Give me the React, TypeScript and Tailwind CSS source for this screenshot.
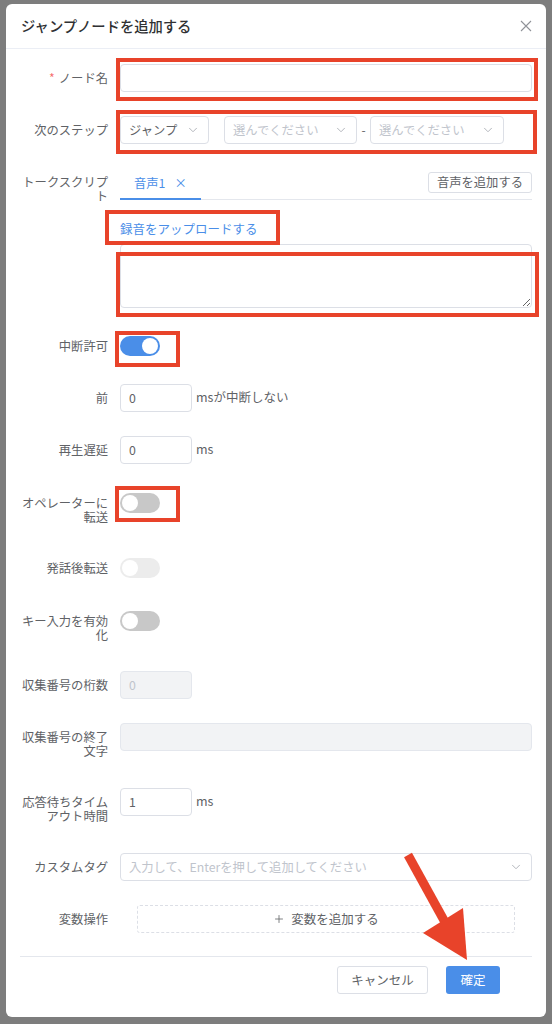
import React from "react";
import { ChevronDown, Plus } from "lucide-react";

// form label on the left, wraps after ~7 full-width chars
function Label({
  children,
  className = "",
  required = false,
}: {
  children: React.ReactNode;
  className?: string;
  required?: boolean;
}) {
  return (
    <div
      className={`w-[100px] shrink-0 pr-[12px] text-right text-[12.3px] leading-[14px] text-[#606266] ${className}`}
    >
      {required && <span className="mr-[4px] text-[#f56c6c]">*</span>}
      {children}
    </div>
  );
}

function Toggle({ state }: { state: "on" | "off" | "disabled" }) {
  const track =
    state === "on" ? "bg-[#4a8ee8]" : state === "off" ? "bg-[#c8c8c8]" : "bg-[#ececec]";
  return (
    <div className={`relative h-[20px] w-[40px] rounded-full ${track}`}>
      <span
        className={`absolute top-[2px] h-[16px] w-[16px] rounded-full bg-white ${
          state === "on" ? "left-[22px]" : "left-[2px]"
        }`}
      />
    </div>
  );
}

function Select({
  className,
  text,
  placeholder = false,
}: {
  className: string;
  text: string;
  placeholder?: boolean;
}) {
  return (
    <div
      className={`flex h-[28px] items-center justify-between rounded-[4px] border border-[#dcdfe6] pl-[8px] pr-[8px] text-[12.3px] ${className}`}
    >
      <span className={placeholder ? "text-[#c0c4cc]" : "text-[#606266]"}>{text}</span>
      <ChevronDown size={14} strokeWidth={1.5} className="text-[#a8abb2]" />
    </div>
  );
}

function SmallInput({ value, disabled = false }: { value: string; disabled?: boolean }) {
  return (
    <div
      className={`flex h-[28px] w-[72px] shrink-0 items-center rounded-[4px] border px-[8px] text-[12.3px] ${
        disabled
          ? "border-[#e4e7ed] bg-[#f2f3f5] text-[#c0c4cc]"
          : "border-[#dcdfe6] bg-white text-[#606266]"
      }`}
    >
      {value}
    </div>
  );
}

export default function App() {
  return (
    <div className="relative h-[1024px] w-[552px] overflow-hidden bg-[#7d7d7d] pl-[6px] pt-[4px] font-['Noto_Sans_CJK_JP','Noto_Sans',sans-serif]">
      <div className="h-[1013px] w-[540px] rounded-[6px] bg-white">
        {/* header */}
        <div className="flex h-[45px] items-center justify-between border-b border-[#ebeef5] pl-[15px] pr-[14px]">
          <h2 className="text-[14.3px] font-medium text-[#303133]">ジャンプノードを追加する</h2>
          <svg width="12" height="12" viewBox="0 0 12 12" className="text-[#909399]">
            <path d="M1 1L11 11M11 1L1 11" stroke="currentColor" strokeWidth="1.1" />
          </svg>
        </div>

        {/* body */}
        <div className="flex flex-col px-[14px]">
          <div className="mt-[15px] flex h-[28px]">
            <Label className="mt-[7px]" required>
              ノード名
            </Label>
            <div className="h-[28px] flex-1 rounded-[4px] border border-[#dcdfe6]" />
          </div>

          <div className="mt-[24px] flex h-[28px]">
            <Label className="mt-[7px]">次のステップ</Label>
            <div className="flex items-center">
              <Select className="w-[89px]" text="ジャンプ" />
              <Select className="ml-[15px] w-[133px]" text="選んでください" placeholder />
              <span className="w-[13px] text-center text-[12px] text-[#606266]">-</span>
              <Select className="w-[134px]" text="選んでください" placeholder />
            </div>
          </div>

          <div className="mt-[28px] flex h-[28px]">
            <Label className="mt-[3px]">トークスクリプト</Label>
            <div className="flex flex-1 items-start justify-between border-b border-[#e4e7ed]">
              <div className="-mb-[1px] flex h-[28px] items-start gap-[9px] border-b-2 border-[#4a8ee8] px-[14px] pt-[4px] text-[12.3px] leading-[15px] text-[#4a8ee8]">
                <span>音声1</span>
                <span>×</span>
              </div>
              <button className="h-[21px] rounded-[3px] border border-[#dcdfe6] px-[8px] text-[12.3px] leading-[19px] text-[#606266]">
                音声を追加する
              </button>
            </div>
          </div>

          <div className="ml-[100px] flex flex-col">
            <span className="mt-[21px] text-[12.5px] leading-[16px] text-[#4a8ee8]">
              録音をアップロードする
            </span>
            <textarea className="mt-[7px] block h-[64px] w-full resize-y rounded-[4px] border border-[#dcdfe6] outline-none" />
          </div>

          <div className="mt-[28px] flex h-[20px]">
            <Label className="mt-[3px]">中断許可</Label>
            <Toggle state="on" />
          </div>

          <div className="mt-[28px] flex h-[28px]">
            <Label className="mt-[7px]">前</Label>
            <SmallInput value="0" />
            <span className="ml-[4px] mt-[6px] text-[12.5px] leading-[14px] text-[#606266]">
              msが中断しない
            </span>
          </div>

          <div className="mt-[24px] flex h-[28px]">
            <Label className="mt-[7px]">再生遅延</Label>
            <SmallInput value="0" />
            <span className="ml-[4px] mt-[6px] text-[12.5px] leading-[14px] text-[#606266]">ms</span>
          </div>

          <div className="mt-[29px] flex h-[20px]">
            <Label className="mt-[3px]">オペレーターに転送</Label>
            <Toggle state="off" />
          </div>

          <div className="mt-[45px] flex h-[20px]">
            <Label className="mt-[3px]">発話後転送</Label>
            <Toggle state="disabled" />
          </div>

          <div className="mt-[33px] flex h-[20px]">
            <Label className="mt-[3px]">キー入力を有効化</Label>
            <Toggle state="off" />
          </div>

          <div className="mt-[40px] flex h-[28px]">
            <Label className="mt-[7px]">収集番号の桁数</Label>
            <SmallInput value="0" disabled />
          </div>

          <div className="mt-[24px] flex h-[28px]">
            <Label className="mt-[7px]">収集番号の終了文字</Label>
            <div className="h-[28px] flex-1 rounded-[4px] border border-[#e4e7ed] bg-[#f2f3f5]" />
          </div>

          <div className="mt-[37px] flex h-[28px]">
            <Label className="mt-[7px]">応答待ちタイムアウト時間</Label>
            <SmallInput value="1" />
            <span className="ml-[4px] mt-[6px] text-[12.5px] leading-[14px] text-[#606266]">ms</span>
          </div>

          <div className="mt-[37px] flex h-[28px]">
            <Label className="mt-[7px]">カスタムタグ</Label>
            <Select className="flex-1" text="入力して、Enterを押して追加してください" placeholder />
          </div>

          <div className="mt-[24px] flex h-[28px]">
            <Label className="mt-[7px]">変数操作</Label>
            <div className="mx-[17px] flex h-[28px] flex-1 items-center justify-center gap-[6px] rounded-[3px] border border-dashed border-[#dcdfe6] text-[12.5px] text-[#606266]">
              <Plus size={12} strokeWidth={1.6} />
              <span>変数を追加する</span>
            </div>
          </div>

          {/* footer */}
          <div className="mt-[23px] border-t border-[#e4e7ed]" />
          <div className="mt-[9px] flex justify-end gap-[18px] pr-[32px]">
            <button className="h-[28px] w-[91px] rounded-[3px] border border-[#dcdfe6] bg-white text-[12.5px] text-[#606266]">
              キャンセル
            </button>
            <button className="h-[28px] w-[54px] rounded-[3px] bg-[#4a8ee8] text-[12.5px] text-white">
              確定
            </button>
          </div>
        </div>
      </div>

      {/* red annotation boxes */}
      <div className="pointer-events-none absolute left-[116px] top-[58px] h-[43px] w-[422px] border-[4px] border-[#e8432a]" />
      <div className="pointer-events-none absolute left-[116px] top-[110px] h-[44px] w-[421px] border-[4px] border-[#e8432a]" />
      <div className="pointer-events-none absolute left-[105px] top-[210px] h-[35px] w-[175px] border-[4px] border-[#e8432a]" />
      <div className="pointer-events-none absolute left-[116px] top-[252px] h-[65px] w-[423px] border-[4px] border-[#e8432a]" />
      <div className="pointer-events-none absolute left-[115px] top-[331px] h-[36px] w-[65px] border-[4px] border-[#e8432a]" />
      <div className="pointer-events-none absolute left-[115px] top-[486px] h-[36px] w-[65px] border-[4px] border-[#e8432a]" />

      {/* red arrow */}
      <svg
        className="pointer-events-none absolute left-0 top-0"
        width="552"
        height="1024"
        viewBox="0 0 552 1024"
      >
        <line x1="408" y1="855" x2="446" y2="924" stroke="#e8432a" strokeWidth="9" />
        <polygon points="423,933 463,908 467,960" fill="#e8432a" />
      </svg>
    </div>
  );
}
